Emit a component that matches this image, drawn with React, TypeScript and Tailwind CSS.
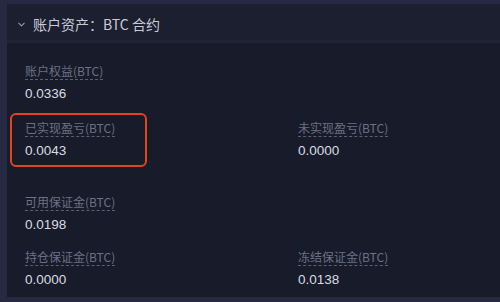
import React from 'react';
import { ChevronDown } from 'lucide-react';

const cjk = { fontFamily: '"Noto Sans CJK SC", "Noto Sans", sans-serif' };
const num = { fontFamily: '"Liberation Sans", "Noto Sans CJK SC", sans-serif' };

interface FieldProps {
  label: string;
  value: string;
  highlight?: boolean;
}

const Field: React.FC<FieldProps> = ({ label, value, highlight = false }) => (
  <div className="relative flex flex-col items-start">
    {highlight && (
      <div className="absolute -left-[15px] -top-[7px] w-[137px] h-[54px] rounded-[6px] border-2 border-[#e5431c]" />
    )}
    <span
      className="text-[12px] leading-[16px] text-[#6c7186] border-b border-dashed border-[#5a5f73]"
      style={cjk}
    >
      {label}
    </span>
    <span className="mt-[5px] text-[13.5px] leading-[18px] text-[#d9dbe4]" style={num}>
      {value}
    </span>
  </div>
);

const App: React.FC = () => {
  return (
    <div className="w-[500px] h-[302px] bg-[#262942] pl-[7px] pt-[4px] pb-[5px] overflow-hidden">
      <div className="h-full flex flex-col bg-[#181b29]">
        <div className="h-[39px] pt-[4px] flex items-center bg-[#1c1f30] border-b-[3px] border-[#212437]">
          <ChevronDown className="ml-[9px] w-[11px] h-[11px] text-[#9a9db0]" strokeWidth={2.2} />
          <span className="ml-[6px] text-[14px] text-[#c9cbd7]" style={cjk}>
            账户资产：BTC 合约
          </span>
        </div>
        <div className="flex flex-col pl-[18px] pt-[20px]">
          <div className="flex">
            <Field label="账户权益(BTC)" value="0.0336" />
          </div>
          <div className="flex mt-[17px]">
            <div className="w-[273px]">
              <Field label="已实现盈亏(BTC)" value="0.0043" highlight />
            </div>
            <Field label="未实现盈亏(BTC)" value="0.0000" />
          </div>
          <div className="flex mt-[34px]">
            <Field label="可用保证金(BTC)" value="0.0198" />
          </div>
          <div className="flex mt-[15px]">
            <div className="w-[273px]">
              <Field label="持仓保证金(BTC)" value="0.0000" />
            </div>
            <Field label="冻结保证金(BTC)" value="0.0138" />
          </div>
        </div>
      </div>
    </div>
  );
};

export default App;
